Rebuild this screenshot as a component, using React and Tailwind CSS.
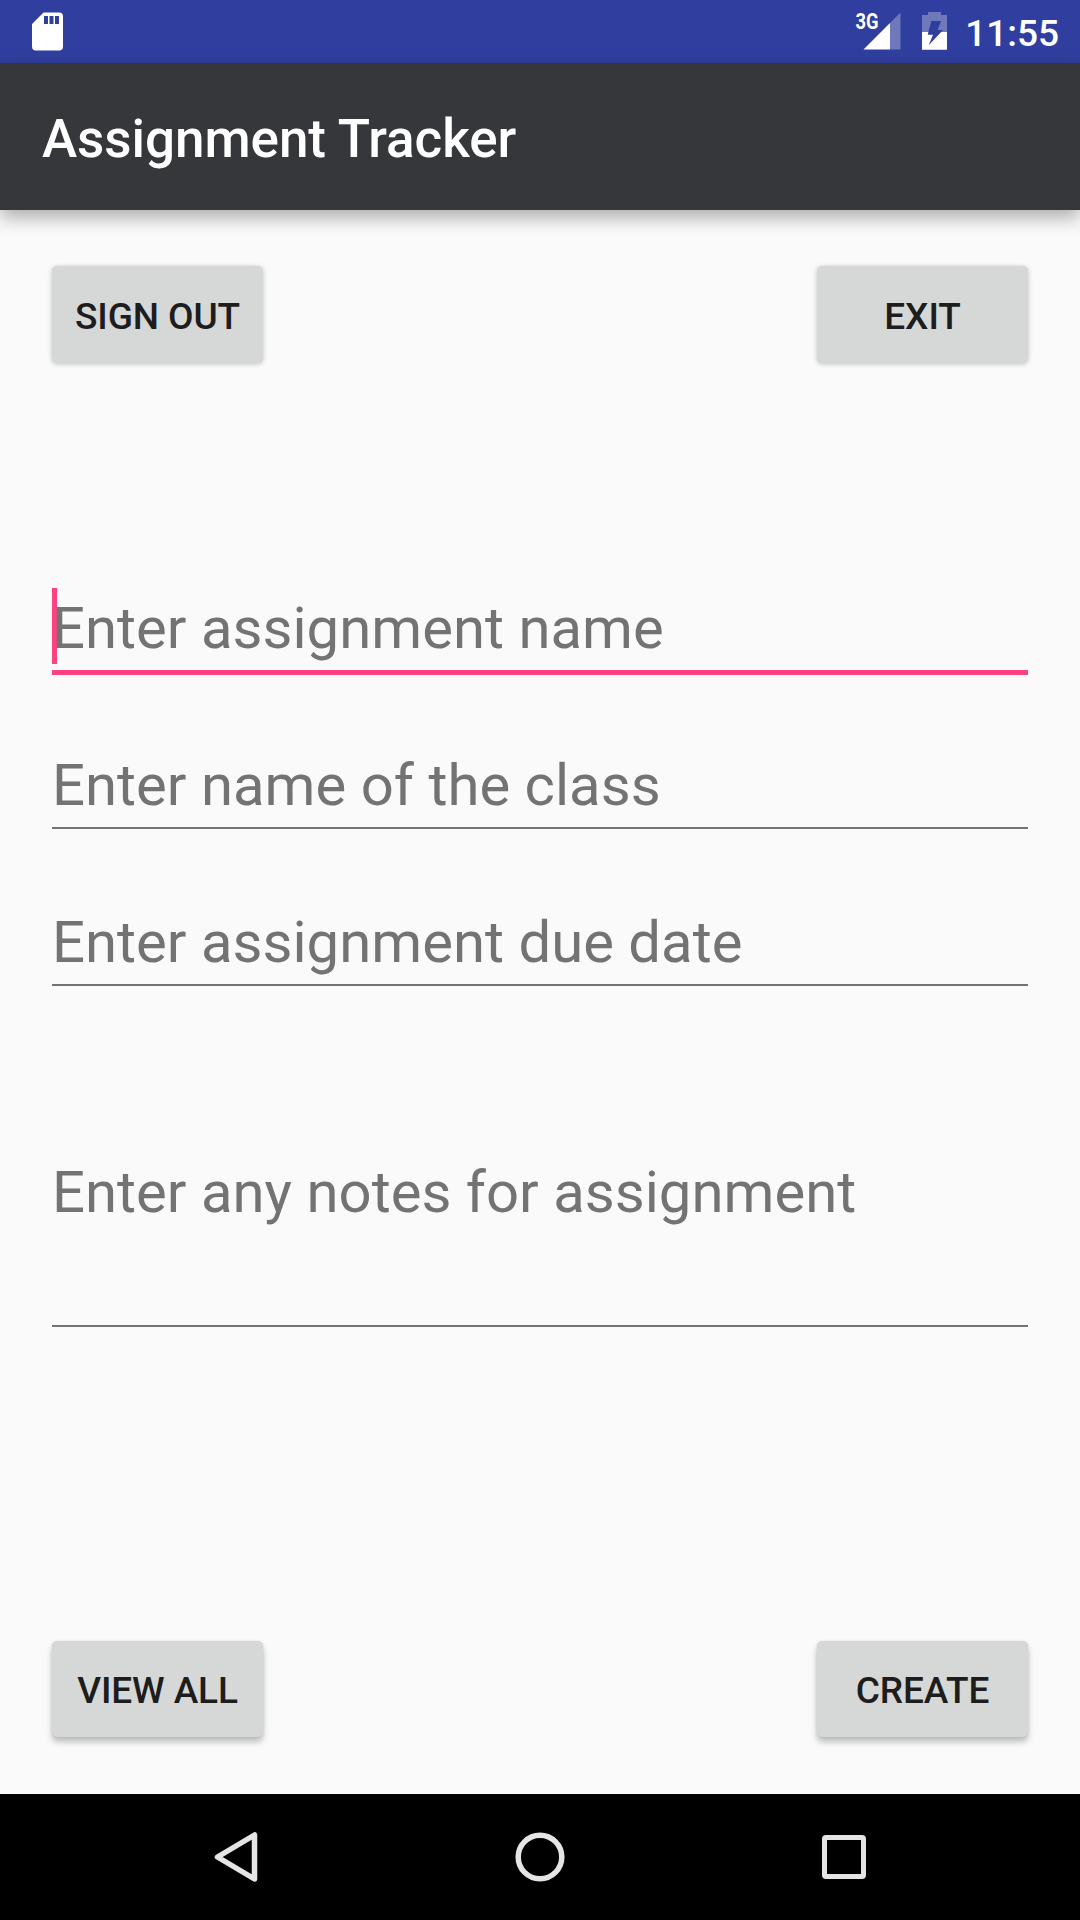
function StatusBar() {
  return (
    <header className="flex h-[63px] items-start bg-[#303f9f] pl-8 pr-[21px] text-white">
      <svg className="mt-3 h-[39px] w-[31px]" viewBox="0 0 31 39">
        <path fill="#fff" fillRule="evenodd" d="M11.5.5H27a4 4 0 0 1 4 4v30a4 4 0 0 1-4 4H4a4 4 0 0 1-4-4V12zM12 4v8h4V4zm5.5 0v8h4V4zM23 4v8h4V4z" />
      </svg>
      <div className="ml-auto flex items-start">
        <svg className="mt-1 h-[46px] w-[46px]" viewBox="0 -8 46 46">
          <path fill="#fff" fillOpacity=".3" d="M45.5.5v37H35V11z" />
          <path fill="#fff" d="M35 11v26.500H8.500z" />
          <text x="0.500" y="17" fill="#fff" fontFamily="Roboto" fontWeight="700" fontSize="22" textLength="23" lengthAdjust="spacingAndGlyphs">3G</text>
        </svg>
        <svg className="ml-[21px] mt-3 h-[38px] w-[25px]" viewBox="0 0 25 38">
          <path fill="#fff" fillOpacity=".3" d="M6 3V0h13v3h6v17h-5.900L21 18h-5.300L19 9H9.300L6.400 20H0V3z" />
          <path fill="#fff" d="M0 20h6.400l-.7 2.700H11L6.700 33.300 19.100 20H25v17.700H0z" />
        </svg>
        <time className="ml-[18px] mt-3 text-[37px] leading-[43px] font-medium">11:55</time>
      </div>
    </header>
  );
}

function ActionButton({ children, raised }) {
  return (
    <button
      className={
        "flex w-[211px] items-center justify-center rounded-[5px] bg-[#d6d7d7] text-[37px] leading-none font-medium tracking-[-0.1px] text-[#1d1d1d] " +
        (raised
          ? "h-24 pt-[3px] shadow-[0_5px_6px_rgba(0,0,0,0.24),0_0_3px_rgba(0,0,0,0.1)]"
          : "h-[97px] pt-1 shadow-[0_1px_5px_rgba(0,0,0,0.24)]")
      }
    >
      {children}
    </button>
  );
}

function Field({ label, className, focused }) {
  return (
    <div
      className={
        "relative flex items-start text-[58px] leading-[68px] tracking-[0.03px] text-[#737373] " +
        (focused ? "border-b-[5px] border-[#ff4081] " : "border-b-2 border-[#737373] ") +
        className
      }
    >
      {focused && <span className="absolute left-0 top-0 h-[76px] w-[5px] bg-[#ff4081]" />}
      <span className="relative">{label}</span>
    </div>
  );
}

export default function App() {
  return (
    <div className="flex h-[1920px] w-[1080px] flex-col overflow-hidden bg-[#fafafa] font-['Roboto',sans-serif]">
      <StatusBar />
      <div className="flex h-[147px] items-center bg-[#36373a] pl-[42px] pt-[5px] shadow-[0_7px_18px_rgba(0,0,0,0.33)]">
        <h1 className="text-[53px] leading-[62px] font-medium tracking-[-0.05px] text-white">Assignment Tracker</h1>
      </div>
      <main className="flex flex-1 flex-col px-[52px] pt-14">
        <div className="flex justify-between">
          <ActionButton>SIGN OUT</ActionButton>
          <ActionButton>EXIT</ActionButton>
        </div>
        <form className="mt-[225px] flex flex-col">
          <Field label="Enter assignment name" className="h-[87px] pt-[6px]" focused />
          <Field label="Enter name of the class" className="mt-[70px] h-[84px] pt-[6px]" />
          <Field label="Enter assignment due date" className="mt-[73px] h-[84px] pt-[6px]" />
          <Field label="Enter any notes for assignment" className="mt-[166px] h-[175px] pt-[6px]" />
        </form>
        <div className="mt-auto mb-[57px] flex justify-between">
          <ActionButton raised>VIEW ALL</ActionButton>
          <ActionButton raised>CREATE</ActionButton>
        </div>
      </main>
      <nav className="flex h-[126px] items-center bg-black">
        <svg className="ml-[214px] h-[50px] w-[44px]" viewBox="0 0 44 50" fill="none" stroke="#e5e5e5" strokeWidth="5.5" strokeLinejoin="round">
          <path d="M40.500 3v44L3.500 25z" />
        </svg>
        <svg className="ml-[257px] h-[50px] w-[50px]" viewBox="0 0 50 50" fill="none" stroke="#e5e5e5" strokeWidth="5.5">
          <circle cx="25" cy="25" r="21.800" />
        </svg>
        <svg className="ml-[257px] h-[44px] w-[44px]" viewBox="0 0 44 44" fill="none" stroke="#e5e5e5" strokeWidth="5">
          <rect x="2.500" y="2.500" width="39" height="39" rx="1.500" />
        </svg>
      </nav>
    </div>
  );
}
